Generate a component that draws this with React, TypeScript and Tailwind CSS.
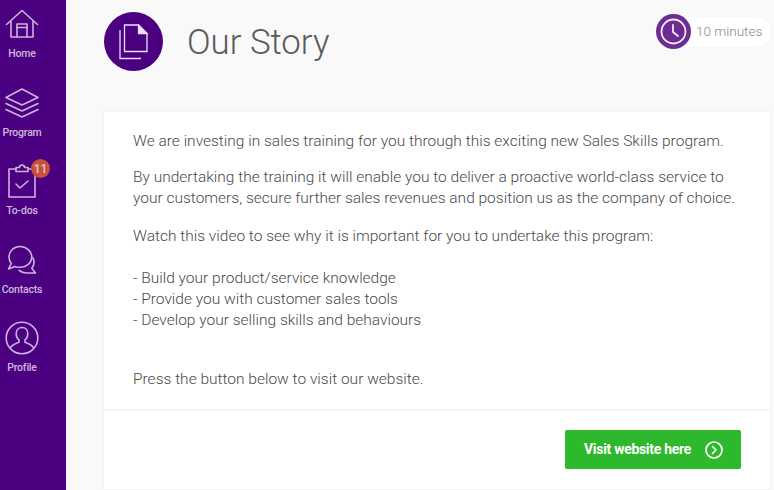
import { ReactNode } from 'react';

const NavItem = ({ label, icon, badge }: { label: string; icon: ReactNode; badge?: string }) => (
  <div className="relative flex h-[78.5px] w-[44px] flex-col items-center">
    <div className="flex h-[44px] items-center justify-center">{icon}</div>
    <span className="mt-[1px] text-[10.5px] leading-[14px] font-medium tracking-[-0.2px] whitespace-nowrap text-[#cdb8dc]">{label}</span>
    {badge && (
      <span className="absolute top-[0px] left-[31px] flex h-[19px] w-[19px] items-center justify-center rounded-full bg-[#c8503c] text-[12px] font-medium text-[#e8c9c0]">
        {badge}
      </span>
    )}
  </div>
);

const stroke = {
  fill: 'none',
  stroke: '#cbb4dc',
  strokeWidth: 1.6,
  strokeLinecap: 'round' as const,
  strokeLinejoin: 'round' as const,
};

const HomeIcon = () => (
  <svg width="34" height="30" viewBox="0 0 34 30" {...stroke}>
    <path d="M1.500 15.500 17 1.500l15.500 14" />
    <path d="M6 12v16h22V12" />
    <path d="M12 28V15h10v13" />
    <path d="M12 18.500h10" />
  </svg>
);

const LayersIcon = () => (
  <svg width="36" height="32" viewBox="0 0 36 32" {...stroke}>
    <path d="M18 2 34 10.500 18 18 2 10.500z" />
    <path d="M2 16.500 18 24l16-7.500" />
    <path d="M2 22.500 18 30l16-7.500" />
  </svg>
);

const TodoIcon = () => (
  <svg width="30" height="36" viewBox="0 0 30 36" {...stroke}>
    <path d="M9 6H2v28h26V6h-7" />
    <path d="M9 8.500V4.500h3.500a2.500 2.500 0 0 1 5 0H21v4z" />
    <path d="m9 21 4 4 8-7" />
  </svg>
);

const ChatIcon = () => (
  <svg width="32" height="30" viewBox="0 0 32 30" {...stroke}>
    <path d="M14 1.500C8 1.500 3 6 3 12c0 2.500.8 4.700 2.200 6.500L2.500 24l6.200-2.600c1.500.6 3.300.9 5.300.9 6.500 0 11.800-4.700 11.800-10.300S20.500 1.500 14 1.500z" />
    <path d="M27 13c.7 1.300 1 2.800 1 4.300 0 2.300-.8 4.400-2.200 6l3.700 4.700h-9c-3 0-5.500-1-7.300-2.700" />
  </svg>
);

const ProfileIcon = () => (
  <svg width="34" height="34" viewBox="0 0 34 34" {...stroke}>
    <circle cx="17" cy="17" r="15.800" />
    <path d="M17 6.500c-3.500 0-5.800 2.800-5.800 6.300 0 2.700 1.200 5 2.800 6.200v2.200c-3 1-6.500 2.400-8.200 5" />
    <path d="M17 6.500c3.500 0 5.800 2.800 5.800 6.300 0 2.700-1.200 5-2.800 6.200v2.200c3 1 6.500 2.400 8.200 5" />
  </svg>
);

const App = () => {
  return (
    <div className="flex h-[490px] w-[774px] overflow-hidden bg-[#f9f9f9] font-['Roboto',sans-serif] font-light">
      <nav className="w-[66px] shrink-0 bg-[#4b0082] pt-[2px]">
        <NavItem label="Home" icon={<HomeIcon />} />
        <NavItem label="Program" icon={<LayersIcon />} />
        <NavItem label="To-dos" icon={<TodoIcon />} badge="11" />
        <NavItem label="Contacts" icon={<ChatIcon />} />
        <NavItem label="Profile" icon={<ProfileIcon />} />
      </nav>

      <main className="min-w-0 flex-1 pt-[12px] pr-[4px] pl-[38px]">
        <header className="flex h-[100px] items-start">
          <div className="flex h-[59px] w-[59px] items-center justify-center rounded-full bg-[#4b0082]">
            <svg width="30" height="36" viewBox="0 0 30 36" fill="none" stroke="#ecdff5" strokeWidth="1.300">
              <path d="M5.500 1h14l8.500 8.500V27.500h-22.500z" />
              <path d="M19.500 1v8.500H28z" fill="#ecdff5" />
              <path d="M1 6v28.500h21" />
            </svg>
          </div>
          <h1 className="mt-[7px] ml-[24px] text-[34.800px] leading-[46px] font-light text-[#5b5b5b]">Our Story</h1>
          <div className="mt-[2px] ml-auto flex items-center">
            <div className="z-10 flex h-[35px] w-[35px] items-center justify-center rounded-full bg-[#6d2c91]">
              <svg width="27" height="27" viewBox="0 0 27 27" fill="none" stroke="#f3ecf7" strokeWidth="1.800" strokeLinecap="round">
                <circle cx="13.500" cy="13.500" r="12" />
                <path d="M13 7v7l5 4" />
              </svg>
            </div>
            <div className="-ml-[4px] flex h-[30px] w-[83px] items-center rounded-r-full bg-white pl-[9px] text-[13.500px] text-[#8a8a8a]">
              10 minutes
            </div>
          </div>
        </header>

        <section className="flex h-[377px] w-[666px] flex-col bg-white text-[15.500px] leading-[21px] text-[#4a4a4a] shadow-[0_0_2px_rgba(0,0,0,0.06)]">
          <div className="h-[299px] border-b-2 border-[#f3f3f3] pt-[19px] pl-[29px]">
            <p>We are investing in sales training for you through this exciting new Sales Skills program.</p>
            <p className="mt-[15px]">
              By undertaking the training it will enable you to deliver a proactive world-class service to
              <br />
              your customers, secure further sales revenues and position us as the company of choice.
            </p>
            <p className="mt-[17px]">Watch this video to see why it is important for you to undertake this program:</p>
            <p className="mt-[21px]">
              - Build your product/service knowledge
              <br />- Provide you with customer sales tools
              <br />- Develop your selling skills and behaviours
            </p>
            <p className="mt-[38px]">Press the button below to visit our website.</p>
          </div>
          <div className="flex justify-end pt-[19px] pr-[29px]">
            <button className="flex h-[39px] w-[176px] items-center rounded-[2px] bg-[#2eb82e] pl-[19px] text-[14px] font-bold tracking-[-0.3px] text-white">
              Visit website here
              <svg className="mt-[1px] ml-[14px]" width="18" height="18" viewBox="0 0 18 18" fill="none" stroke="#fff" strokeWidth="1.700" strokeLinecap="round" strokeLinejoin="round">
                <circle cx="9" cy="9" r="8" />
                <path d="m7.500 5.500 3.500 3.500-3.500 3.500" />
              </svg>
            </button>
          </div>
        </section>
      </main>
    </div>
  );
};

export default App;
